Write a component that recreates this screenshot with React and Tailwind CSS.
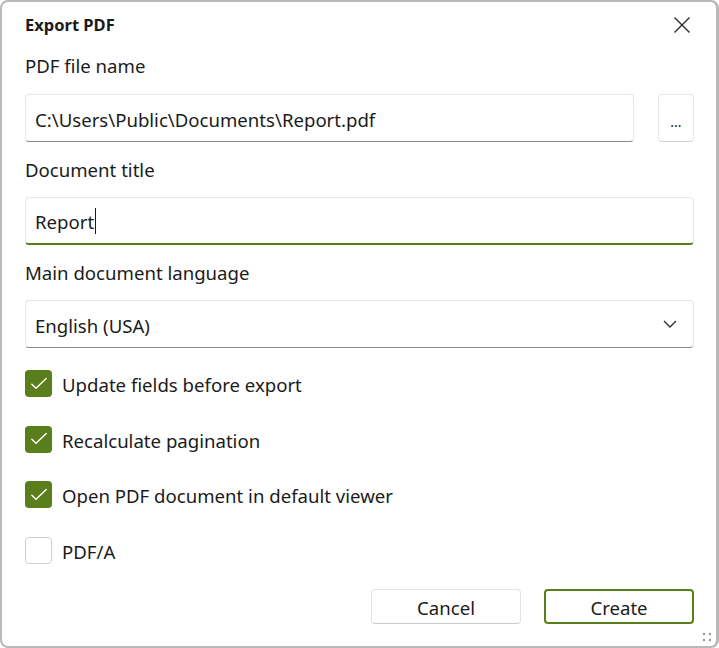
import React from "react";

const font = { fontFamily: '"Noto Sans", "Open Sans", sans-serif' };

function Check({ checked, label }) {
  return (
    <div className="flex items-center h-[27px]">
      {checked ? (
        <div className="w-[27px] h-[27px] rounded-[4px] bg-[#5b7e1d] flex items-center justify-center">
          <svg width="18" height="18" viewBox="0 0 18 18" fill="none">
            <path d="M1.8 9.2 L6 13.3 L16.2 3.4" stroke="white" strokeWidth="1.4" strokeLinecap="round" strokeLinejoin="round" />
          </svg>
        </div>
      ) : (
        <div className="w-[27px] h-[27px] rounded-[4px] bg-white border border-[#cfcfcf]" />
      )}
      <span className="ml-[10px] text-[18.6px] text-[#1b1b1b] leading-6 pt-[3px]">{label}</span>
    </div>
  );
}

export default function App() {
  return (
    <div className="w-[719px] h-[648px] bg-white" style={font}>
      <div className="relative w-[719px] h-[648px] border-2 border-r-[3px] border-[#b9b9b9] rounded-[8px] bg-white flex flex-col">
        <div className="flex items-center justify-between h-[46px] pl-[23px] pr-[25px]">
          <span className="text-[16.5px] font-bold text-[#1b1b1b]">Export PDF</span>
          <svg width="18" height="18" viewBox="0 0 18 18" fill="none">
            <path d="M1.5 1.5 L16.5 16.5 M16.5 1.5 L1.5 16.5" stroke="#2a2a2a" strokeWidth="1.4" />
          </svg>
        </div>
        <div className="flex flex-col pl-[23px] pr-[22px]">
          <div className="h-6 mt-[6px] text-[18.6px] leading-6 text-[#1b1b1b]">PDF file name</div>
          <div className="flex mt-4 gap-[24px]">
            <div className="flex-1 h-12 rounded-[4px] border border-[#e6e6e6] border-b-[#8a8a8a] flex items-center pl-[9px] pt-[3px] text-[18.6px] text-[#1b1b1b]">
              C:\Users\Public\Documents\Report.pdf
            </div>
            <div className="w-[36px] h-12 rounded-[4px] border border-[#e6e6e6] border-b-[#cfcfcf] flex items-end justify-center pb-[12px] text-[14px] leading-none text-[#1b1b1b]">
              ...
            </div>
          </div>
          <div className="h-6 mt-4 text-[18.6px] leading-6 text-[#1b1b1b]">Document title</div>
          <div className="mt-[15px] h-12 rounded-[4px] border border-[#e6e6e6] border-b-2 border-b-[#5b7e1d] flex items-center pl-[9px] pt-[3px] text-[18.6px] text-[#1b1b1b]">
            <span>Report</span>
            <span className="inline-block w-px h-[26px] bg-[#1b1b1b] ml-px -mt-[3px]" />
          </div>
          <div className="h-6 mt-4 text-[18.6px] leading-6 text-[#1b1b1b]">Main document language</div>
          <div className="mt-[15px] h-12 rounded-[4px] border border-[#e6e6e6] border-b-[#8a8a8a] flex items-center justify-between pl-[9px] pr-[16px] text-[18.6px] text-[#1b1b1b]">
            <span className="pt-[3px]">English (USA)</span>
            <svg width="14" height="14" viewBox="0 0 14 14" fill="none">
              <path d="M1 4 L7 10 L13 4" stroke="#2a2a2a" strokeWidth="1.3" />
            </svg>
          </div>
          <div className="flex flex-col gap-[28.5px] mt-[22px]">
            <Check checked label="Update fields before export" />
            <Check checked label="Recalculate pagination" />
            <Check checked label="Open PDF document in default viewer" />
            <Check label="PDF/A" />
          </div>
          <div className="flex justify-end gap-[23px] mt-[25px]">
            <button className="w-[150px] h-[35px] rounded-[4px] border border-[#e2e2e2] border-b-[#cdcdcd] bg-white pt-[3px] text-[18.6px] text-[#1b1b1b]">Cancel</button>
            <button className="w-[150px] h-[35px] rounded-[4px] border-2 border-[#5b7e1d] bg-white pt-[3px] text-[18.6px] text-[#1b1b1b]">Create</button>
          </div>
        </div>
        <svg className="absolute right-[3px] bottom-[3px]" width="12" height="12" viewBox="0 0 12 12">
          <circle cx="3" cy="3" r="1.2" fill="#9a9a9a" />
          <circle cx="9" cy="3" r="1.2" fill="#9a9a9a" />
          <circle cx="3" cy="9" r="1.2" fill="#9a9a9a" />
          <circle cx="9" cy="9" r="1.2" fill="#9a9a9a" />
        </svg>
      </div>
    </div>
  );
}
